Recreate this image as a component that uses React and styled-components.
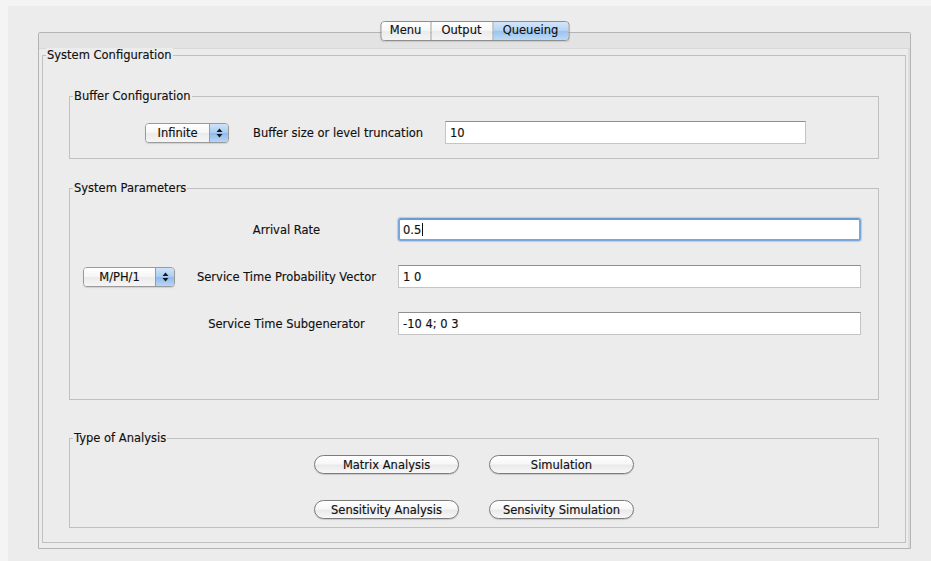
import { Fragment } from 'react';
import styled, { createGlobalStyle } from 'styled-components';

const GlobalStyle = createGlobalStyle`
  html, body {
    margin: 0;
    padding: 0;
    background: #f4f4f4;
  }
  body {
    font-family: "DejaVu Sans", "Liberation Sans", sans-serif;
    font-size: 11.5px;
    color: #101010;
    -webkit-text-stroke: 0.15px #101010;
  }
`;

const Window = styled.div`
  margin: 6px 0 0 8px;
  height: 555px;
  box-sizing: border-box;
  padding: 26px 0 0 30px;
  background: #ececec;
`;

const TabPane = styled.div`
  position: relative;
  width: 873px;
  height: 517px;
  box-sizing: border-box;
  display: flex;
  flex-direction: column;
  border: 1px solid #b4b4b4;
  border-radius: 2px 2px 0 0;
  background: #ececec;
  box-shadow: inset -2px 0 0 #dedede;
`;

const TabBand = styled.div`
  height: 15px;
  background: #e3e3e3;
  border-bottom: 1px solid #d8d8d8;
`;

const Tabs = styled.div`
  position: absolute;
  top: -12px;
  left: 50%;
  transform: translateX(-50%);
  display: flex;
  height: 20px;
  box-sizing: border-box;
  border: 1px solid #8e8e8e;
  border-radius: 4px;
  overflow: hidden;
  box-shadow: 0 1px 1px rgba(0, 0, 0, 0.12);
`;

const Tab = styled.div`
  width: ${(p) => p.$w}px;
  display: flex;
  align-items: center;
  justify-content: center;
  line-height: 1;
  border-left: ${(p) => (p.$first ? 'none' : '1px solid #a8a8a8')};
  background: ${(p) =>
    p.$active
      ? 'linear-gradient(#d3e6fb 0%, #b5d4f5 48%, #9ac4f0 52%, #bcdaf8 100%)'
      : 'linear-gradient(#ffffff 0%, #f6f6f6 48%, #ebebeb 52%, #f4f4f4 100%)'};
`;

const PaneBody = styled.div`
  flex: 1;
  padding: 6px 4px 5px 3px;
`;

const Group = styled.div`
  position: relative;
  box-sizing: border-box;
  height: ${(p) => p.$h}px;
  margin-top: ${(p) => p.$mt || 0}px;
  border: 1px solid #c0c0c0;
  padding: ${(p) => p.$pad || '0'};
`;

const Caption = styled.span`
  position: absolute;
  top: -8px;
  left: 3px;
  padding: 0 1px;
  line-height: 14px;
  background: #ececec;
`;

const BufferRow = styled.div`
  display: flex;
  align-items: center;
  height: 23px;
  padding: 24px 0 0 75px;
`;

const Popup = styled.div`
  display: flex;
  width: ${(p) => p.$w}px;
  height: 20px;
  box-sizing: border-box;
  margin-right: ${(p) => p.$mr || 0}px;
  border: 1px solid #9a9a9a;
  border-radius: 4px;
  overflow: hidden;
  box-shadow: 0 1px 1px rgba(0, 0, 0, 0.12);
`;

const PopupText = styled.div`
  flex: 1;
  display: flex;
  align-items: center;
  justify-content: center;
  background: linear-gradient(#ffffff 0%, #f6f6f6 48%, #ebebeb 52%, #f5f5f5 100%);
`;

const PopupArrows = styled.div`
  width: 18px;
  display: flex;
  align-items: center;
  justify-content: center;
  border-left: 1px solid #7f9fc4;
  background: linear-gradient(#cfe3fa 0%, #a9cdf3 48%, #8ebbee 52%, #b6d6f7 100%);
`;

const Label = styled.div`
  width: ${(p) => (p.$w ? `${p.$w}px` : 'auto')};
  text-align: ${(p) => p.$align || 'left'};
`;

const Field = styled.div`
  width: ${(p) => (p.$w ? `${p.$w}px` : 'auto')};
  height: 23px;
  box-sizing: border-box;
  display: flex;
  align-items: center;
  padding-left: ${(p) => (p.$focus ? 3 : 4)}px;
  background: #fff;
  border: ${(p) => (p.$focus ? '2px solid #7aa6d9' : '1px solid #c4c4c4')};
  border-top-color: ${(p) => (p.$focus ? '#6c9bd2' : '#8f8f8f')};
  border-radius: ${(p) => (p.$focus ? 3 : 0)}px;
  box-shadow: ${(p) => (p.$focus ? '0 0 1px 1px rgba(122, 166, 217, 0.45)' : 'none')};
`;

const Caret = styled.span`
  display: inline-block;
  width: 1px;
  height: 13px;
  margin-left: 1px;
  background: #111;
`;

const ParamGrid = styled.div`
  display: grid;
  grid-template-columns: 92px 223px 463px;
  grid-auto-rows: 23px;
  row-gap: 24px;
  align-items: center;
  padding: 29px 0 0 13px;
`;

const ButtonGrid = styled.div`
  display: grid;
  grid-template-columns: 145px 145px;
  grid-auto-rows: 19px;
  column-gap: 30px;
  row-gap: 26px;
  justify-content: center;
  padding-top: 16px;
`;

const PillButton = styled.button`
  height: 19px;
  padding: 0;
  font: inherit;
  color: inherit;
  border: 1px solid #7c7c7c;
  border-radius: 10px;
  background: linear-gradient(#ffffff 0%, #f7f7f7 48%, #e9e9e9 52%, #f7f7f7 100%);
  box-shadow: 0 1px 1px rgba(0, 0, 0, 0.15);
`;

const UpDown = () => (
  <svg width="7" height="10" viewBox="0 0 7 10">
    <path d="M3.5 0.5 L6.5 4 L0.5 4 Z" fill="#1a1a1a" />
    <path d="M3.5 9.5 L6.5 6 L0.5 6 Z" fill="#1a1a1a" />
  </svg>
);

const Combo = ({ value, width, mr }) => (
  <Popup $w={width} $mr={mr}>
    <PopupText>{value}</PopupText>
    <PopupArrows>
      <UpDown />
    </PopupArrows>
  </Popup>
);

const tabs = [
  { name: 'Menu', w: 49 },
  { name: 'Output', w: 61 },
  { name: 'Queueing', w: 75, active: true },
];

const params = [
  { label: 'Arrival Rate', value: '0.5', focus: true },
  { label: 'Service Time Probability Vector', value: '1 0', combo: 'M/PH/1' },
  { label: 'Service Time Subgenerator', value: '-10 4; 0 3' },
];

const analyses = ['Matrix Analysis', 'Simulation', 'Sensitivity Analysis', 'Sensivity Simulation'];

export default function App() {
  return (
    <>
      <GlobalStyle />
      <Window>
        <TabPane>
          <Tabs>
            {tabs.map((t, i) => (
              <Tab key={t.name} $w={t.w} $active={t.active} $first={i === 0}>
                {t.name}
              </Tab>
            ))}
          </Tabs>
          <TabBand />
          <PaneBody>
            <Group $h={488} $pad="40px 26px 0 26px">
              <Caption>System Configuration</Caption>

              <Group $h={63}>
                <Caption>Buffer Configuration</Caption>
                <BufferRow>
                  <Combo value="Infinite" width={84} mr={24} />
                  <Label $w={192}>Buffer size or level truncation</Label>
                  <Field $w={361}>10</Field>
                </BufferRow>
              </Group>

              <Group $h={212} $mt={29}>
                <Caption>System Parameters</Caption>
                <ParamGrid>
                  {params.map((p) => (
                    <Fragment key={p.label}>
                      <div>{p.combo && <Combo value={p.combo} width={92} />}</div>
                      <Label $align="center">{p.label}</Label>
                      <Field $focus={p.focus}>
                        {p.value}
                        {p.focus && <Caret />}
                      </Field>
                    </Fragment>
                  ))}
                </ParamGrid>
              </Group>

              <Group $h={90} $mt={38}>
                <Caption>Type of Analysis</Caption>
                <ButtonGrid>
                  {analyses.map((a) => (
                    <PillButton key={a}>{a}</PillButton>
                  ))}
                </ButtonGrid>
              </Group>
            </Group>
          </PaneBody>
        </TabPane>
      </Window>
    </>
  );
}
